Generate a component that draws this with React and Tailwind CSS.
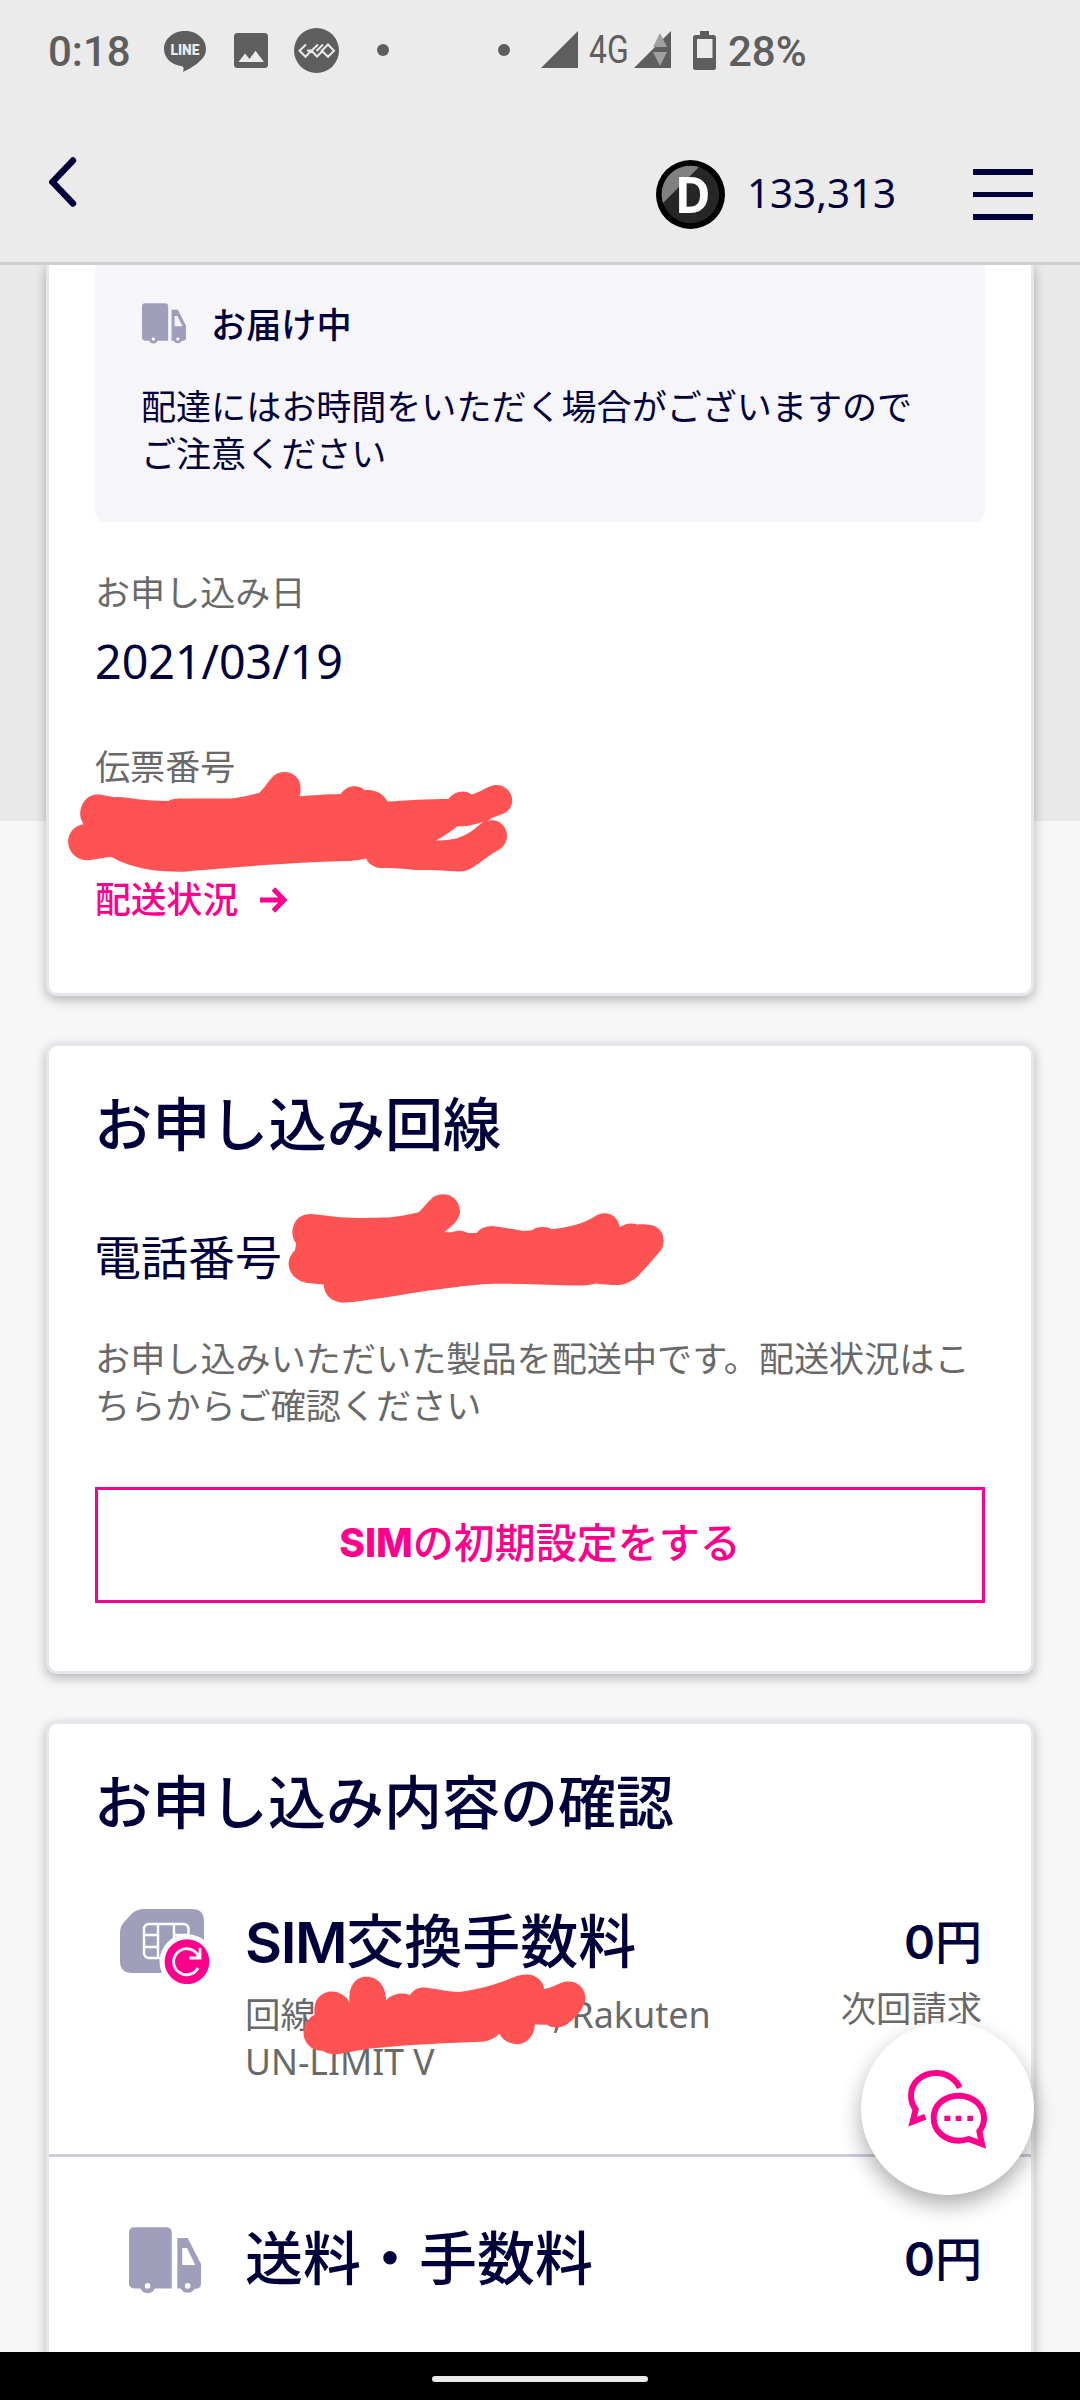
import React from 'react';

const BackIcon = () => (
    <svg className="h-[50px] w-7" viewBox="0 0 28 50" fill="none">
        <path d="M24 3.500 3.500 25l20.500 21.500" stroke="#00003b" strokeWidth="6.400" strokeLinecap="round" />
    </svg>
);

const TruckIcon = ({ className }) => (
    <svg className={className} viewBox="0 0 72.4 67" fill="#9f9fbc" fillRule="evenodd">
        <path d="M5 0H38a5 5 0 0 1 5 5V61.700H26A8 8 0 0 1 11.500 61.700H5a5 5 0 0 1-5-5V5a5 5 0 0 1 5-5ZM18.700 56.200a2.800 2.800 0 1 0 0 5.600 2.800 2.800 0 0 0 0-5.600Z" />
        <path d="M48.600 11H59L72.400 37V57a5 5 0 0 1-5 5H66A8 8 0 0 1 52 61.700H48.600ZM53.600 21V38H66.600L58.300 21ZM59 56.200a2.800 2.800 0 1 0 0 5.600 2.800 2.800 0 0 0 0-5.600Z" />
    </svg>
);

const SimIcon = () => (
    <svg className="h-[75px] w-[90px]" viewBox="0 0 90 75" fill="none">
        <path
            d="M24 0H72Q84 0 84 12V52Q84 64 72 64H12Q0 64 0 52V24Q0 17 5 12L12 4.500Q17 0 24 0Z"
            fill="#9f9fbc"
        />
        <g stroke="#fff" strokeWidth="2.400">
            <rect x="24" y="15" width="44.500" height="34" rx="5" />
            <path d="M38 15V49M54 15V40M24 26H38M24 38H38M54 26H68" />
        </g>
        <circle cx="67" cy="52.700" r="27.500" fill="#fff" />
        <circle cx="67" cy="52.700" r="22.400" fill="#ff008c" />
        <path d="M78 59A13 13 0 1 1 78.500 47.500M80 39V49H69.500" stroke="#fff" strokeWidth="2.800" />
    </svg>
);

const ChatIcon = () => (
    <svg className="-ml-[2px] h-20 w-20" viewBox="1040 565 240 240" fill="none" stroke="#ff008c" strokeWidth="18">
        <path d="M1198 621C1185 593 1158 577 1128 577C1084 577 1052 607 1052 645C1052 660 1056 673 1066 686L1057 723L1095 708" />
        <path d="M1225 775L1265 790L1257 752C1267 740 1271 727 1271 712C1271 674 1237 645 1195 645C1152 645 1120 674 1120 712C1120 750 1152 780 1195 780C1206 780 1216 778 1225 775Z" />
        <path d="M1152 713H1170M1186 713H1203M1221 713H1238" strokeWidth="16" />
    </svg>
);

const StatusBar = () => (
    <div className="relative h-[102px] font-['Roboto',sans-serif] text-[#5e5e5e]">
        <span className="absolute left-12 top-[27px] text-[42px] leading-[50px] font-medium">0:18</span>
        <svg className="absolute left-[164px] top-[31px] h-[41px] w-[42px]" viewBox="0 0 42 41">
            <path
                d="M21 0C32.600 0 42 7.700 42 18C42 22 40.400 25.500 37.500 28.600C33 33.500 25 38.500 19 41C19.800 38.500 20.500 35.500 17 35C7 33.800 0 26.600 0 18C0 7.700 9.400 0 21 0Z"
                fill="#5e5e5e"
            />
            <text x="21" y="23.500" textAnchor="middle" textLength="29" lengthAdjust="spacingAndGlyphs" className="fill-[#ebebeb] font-['Roboto',sans-serif] text-[14.500px] font-black">LINE</text>
        </svg>
        <svg className="absolute left-[234px] top-[33px] h-[35px] w-[34px]" viewBox="0 0 34 35">
            <rect width="34" height="35" rx="3.500" fill="#5e5e5e" />
            <path d="M4.500 29 11 20.500 15.500 26 21.500 17.800 30 29Z" fill="#ebebeb" />
        </svg>
        <svg className="absolute left-[294px] top-7 h-[45px] w-[45px]" viewBox="0 0 45 45" fill="none">
            <circle cx="22.500" cy="22.500" r="22.500" fill="#5e5e5e" />
            <path
                d="M12 16.500 5.500 22.700 11.500 28.800 17.500 22.500 13 22.500M24 16.500 17.500 22.800 23 28.500 29 22.500M29 16.500 22.500 23M34 16.500 27.800 22.700 34 28.800 40 22.700Z"
                stroke="#ebebeb"
                strokeWidth="2"
            />
        </svg>
        <span className="absolute left-[377px] top-11 h-3 w-3 rounded-full bg-[#5e5e5e]" />
        <span className="absolute left-[498px] top-11 h-3 w-3 rounded-full bg-[#5e5e5e]" />
        <svg className="absolute left-[541px] top-[31px] h-[37px] w-[37px]" viewBox="0 0 37 37">
            <path d="M37 0V37H0Z" fill="#5e5e5e" />
        </svg>
        <span className="absolute left-[589px] top-7 origin-left scale-x-[0.840] text-[38px] leading-[44px]">4G</span>
        <svg className="absolute left-[634px] top-[31px] h-[37px] w-[37px]" viewBox="0 0 37 37">
            <path d="M37 0V37H0Z" fill="#5e5e5e" />
            <path d="M26 2 33 16H19Z" fill="#a0a0a0" />
            <path d="M26 35 33 21H19Z" fill="#a0a0a0" />
        </svg>
        <svg className="absolute left-[693px] top-[31px] h-[39px] w-[23px]" viewBox="0 0 23 39">
            <path d="M7 0H16V4H20.500Q23 4 23 6.500V36.500Q23 39 20.500 39H2.500Q0 39 0 36.500V6.500Q0 4 2.500 4H7ZM4 8V27H19.500V8Z" fill="#5e5e5e" fillRule="evenodd" />
        </svg>
        <span className="absolute left-[728px] top-[27px] text-[42px] leading-[50px] font-medium">28%</span>
    </div>
);

const Header = () => (
    <header className="relative z-10 h-[265px] shrink-0 border-b-3 border-[#cfcfcf] bg-[#ebebeb]">
        <StatusBar />
        <div className="flex items-start pl-[49px] pr-[47px]">
            <div className="mt-[55px]">
                <BackIcon />
            </div>
            <div className="ml-auto mt-[58px] flex items-center">
                <svg className="h-[69px] w-[69px] overflow-visible" viewBox="0 0 69 69">
                    <circle cx="34.500" cy="34.500" r="34.500" fill="#000" />
                    <circle cx="34.500" cy="34.500" r="28.700" fill="#262626" />
                    <path d="M7 43A28.700 28.700 0 0 1 43 7Z" fill="#808080" />
                    <text x="19" y="53" textLength="35.500" lengthAdjust="spacingAndGlyphs" className="fill-white font-['Noto_Sans',sans-serif] text-[50px] font-bold">D</text>
                </svg>
                <span className="-mt-1 ml-[22px] w-[226px] text-[40.300px] leading-[56px]">133,313</span>
                <div className="flex w-[60px] flex-col gap-[17px]">
                    <span className="h-[5.500px] bg-[#00003b]" />
                    <span className="h-[5.500px] bg-[#00003b]" />
                    <span className="h-[5.500px] bg-[#00003b]" />
                </div>
            </div>
        </div>
    </header>
);

const DeliveryCard = () => (
    <section className="relative h-[731px] rounded-b-[11px] border-x-3 border-b-3 border-[#e5e5ee] bg-white px-[46px] shadow-[0_4px_12px_rgba(0,0,0,0.28)]">
        <div className="h-[257px] rounded-b-[10px] bg-[#f5f5fa] px-[47px] pt-[34px]">
            <div className="flex h-[50px] items-center">
                <TruckIcon className="-mt-[2px] h-[41px] w-[44px]" />
                <span className="ml-[25px] text-[35.200px] leading-[50px] font-medium">お届け中</span>
            </div>
            <p className="-ml-px mt-[34px] text-[35.050px] leading-[47px] whitespace-nowrap">
                配達にはお時間をいただく場合がございますので
                <br />
                ご注意ください
            </p>
        </div>
        <p className="mt-[47px] text-[35.100px] leading-[47px] text-[#696969]">お申し込み日</p>
        <p className="mt-[15px] text-[46.600px] leading-[60px]">2021/03/19</p>
        <p className="mt-[52px] text-[35.100px] leading-[47px] text-[#696969]">伝票番号</p>
        <a className="mt-[86px] flex items-center text-[35.800px] leading-[47px] font-medium text-[#ff008c]">
            配送状況
            <svg className="ml-[22px] h-[26px] w-7" viewBox="0 0 28 26" fill="none" stroke="#ff008c" strokeWidth="5">
                <path d="M0 13H23M13.500 2 24 13 13.500 24" />
            </svg>
        </a>
        <svg className="absolute left-[18px] top-[505px] h-[103px] w-[448px]" viewBox="80 90 1300 310" preserveAspectRatio="none">
            <path
                d="M128 253C112 230 117 200 132 182C145 165 165 161 182 165L218 172C238 169 255 174 280 177C310 181 350 183 375 183C385 176 395 177 410 176H553C585 172 610 166 637 159C655 142 664 122 680 107C700 90 730 94 746 111C758 124 761 147 755 169C790 166 835 163 874 162C886 145 902 138 917 139C930 140 937 145 944 151C975 147 999 163 1010 185C1060 181 1130 177 1187 177C1203 155 1235 147 1254 164C1280 157 1298 140 1318 136C1350 131 1373 157 1372 184C1370 209 1354 220 1338 225C1324 230 1311 235 1300 243C1335 235 1358 262 1357 290C1355 312 1344 325 1328 333C1295 353 1272 376 1250 387C1234 396 1220 396 1198 395C1160 390 1125 391 1090 391C1055 387 1027 385 986 385C966 380 953 370 948 356C935 359 920 362 895 364C830 366 775 368 715 372C620 378 530 386 420 396C345 397 275 390 208 351C180 354 158 360 137 362C105 360 84 336 83 307C83 277 104 256 128 253ZM1150 302C1175 302 1190 300 1210 296C1240 287 1265 268 1286 246C1260 257 1237 260 1212 260C1193 275 1175 290 1150 302Z"
                fill="#ff5353"
                fillRule="evenodd"
            />
        </svg>
    </section>
);

const LineCard = () => (
    <section className="relative mt-[47px] h-[631px] rounded-[11px] border-3 border-[#e5e5ee] bg-white px-[46px] pt-[43px] shadow-[0_4px_12px_rgba(0,0,0,0.28)]">
        <h2 className="-ml-px text-[58.200px] leading-[70px] font-medium">お申し込み回線</h2>
        <p className="-ml-px mt-[68px] text-[47px] leading-[60px]">電話番号</p>
        <p className="mt-[48px] text-[35.130px] leading-[47px] whitespace-nowrap text-[#696969]">
            お申し込みいただいた製品を配送中です。配送状況はこ
            <br />
            ちらからご確認ください
        </p>
        <button className="mt-[58px] flex h-[116px] w-full items-center justify-center border-3 border-[#ff008c] pb-[4px] text-[41px] font-medium text-[#ff008c]">
            <span className="font-['Inter',sans-serif] text-[39px] font-extrabold">SIM</span>の初期設定をする
        </button>
        <svg className="absolute left-[235px] top-[146px] h-[113px] w-[383px]" viewBox="580 485 910 340" preserveAspectRatio="none">
            <path
                d="M609 640C597 622 599 598 603 585C608 565 622 551 645 551C665 553 690 558 714 561C750 564 795 563 828 562C855 558 880 553 900 546C913 532 920 515 934 501C947 490 965 488 979 499C992 509 999 529 998 548C995 574 976 589 961 606H980C991 599 1006 600 1016 608H1038C1046 594 1058 588 1076 587C1100 591 1122 597 1148 602L1169 600C1182 588 1204 588 1216 597C1255 593 1295 580 1322 556C1346 540 1372 553 1378 591C1390 580 1404 576 1420 583C1433 581 1443 584 1455 585C1473 592 1483 611 1482 633C1481 650 1478 657 1471 667C1454 692 1435 721 1417 743C1402 757 1386 765 1372 765C1355 764 1336 763 1321 760C1300 767 1285 767 1259 766C1200 765 1140 760 1078 761C1045 763 1010 767 980 772C910 783 850 796 790 808C765 813 738 818 718 818C692 814 673 793 675 763C655 760 640 762 622 754C602 744 590 721 591 697C593 679 599 669 606 660Z"
                fill="#ff5353"
            />
        </svg>
    </section>
);

const Price = () => (
    <p className="text-[47px] leading-[70px] font-medium">
        <span className="font-['Inter',sans-serif] font-semibold">0</span>円
    </p>
);

const OrderCard = () => (
    <section className="relative mt-[47px] h-[760px] rounded-[11px] border-3 border-[#e5e5ee] bg-white pt-[43px] shadow-[0_4px_12px_rgba(0,0,0,0.28)]">
        <h2 className="-ml-px px-[46px] text-[58px] leading-[70px] font-medium">お申し込み内容の確認</h2>
        <div className="mt-[69px] flex h-[251px] border-b-3 border-[#cbcbde] pl-[71px] pr-[49px]">
            <div className="w-[125px] shrink-0 pt-[3px]">
                <SimIcon />
            </div>
            <div>
                <h3 className="text-[58px] leading-[70px] font-medium">
                    <span className="font-['Inter',sans-serif] text-[57px] font-semibold tracking-[-0.025em]">SIM</span>交換手数料
                </h3>
                <p className="mt-[13px] text-[35.500px] leading-[47px] whitespace-nowrap text-[#696969]">
                    回線<span className="inline-block w-[246px] text-right">,</span> <span className="text-[36px]">Rakuten</span>
                    <br />
                    UN-LIMIT V
                </p>
            </div>
            <div className="ml-auto text-right">
                <Price />
                <p className="mt-[8px] text-[35.300px] leading-[47px] text-[#696969]">次回請求</p>
            </div>
        </div>
        <div className="flex pl-[80px] pr-[49px] pt-[66px]">
            <div className="w-[116px] shrink-0 pt-1">
                <TruckIcon className="h-[67px] w-[72px]" />
            </div>
            <h3 className="text-[58px] leading-[70px] font-medium">送料・手数料</h3>
            <div className="ml-auto">
                <Price />
            </div>
        </div>
        <svg className="absolute left-[252px] top-[249px] h-[83px] w-[286px]" viewBox="730 700 800 250" preserveAspectRatio="none">
            <path
                d="M768 826C764 790 777 764 805 757C832 752 858 768 866 790C861 750 876 718 903 712C940 705 968 735 968 782C985 763 1010 757 1034 766C1047 749 1060 742 1078 744C1110 749 1145 757 1172 757C1230 750 1280 732 1325 713C1345 704 1366 702 1382 709C1401 719 1409 735 1410 748C1432 745 1447 733 1465 727C1502 719 1526 745 1526 778C1522 805 1505 825 1485 845C1473 857 1457 865 1444 864C1430 864 1424 860 1417 856L1384 855C1383 883 1370 906 1343 914C1314 917 1294 902 1285 883C1270 898 1255 905 1235 907C1140 911 1050 914 940 926C900 931 875 936 848 942C825 948 805 944 790 934C762 935 738 912 737 882C737 854 752 836 768 826Z"
                fill="#ff5353"
            />
        </svg>
    </section>
);

const App = () => {
    return (
        <div className="relative flex h-[2400px] w-[1080px] flex-col overflow-hidden bg-[#f7f7f7] font-['Noto_Sans','Noto_Sans_CJK_JP',sans-serif] text-[#00003b]">
            <Header />
            <main className="flex-1 overflow-hidden bg-[linear-gradient(#e9e9e9_556px,#f7f7f7_556px)] px-[46px]">
                <DeliveryCard />
                <LineCard />
                <OrderCard />
            </main>
            <button className="absolute left-[861px] top-[2022px] flex h-[173px] w-[173px] items-center justify-center rounded-full bg-white shadow-[0_10px_22px_rgba(0,0,0,0.32)]">
                <ChatIcon />
            </button>
            <footer className="z-10 flex h-12 shrink-0 items-center justify-center bg-black pt-[6px]">
                <span className="h-[6px] w-[216px] rounded-full bg-[#e9e9e9]" />
            </footer>
        </div>
    );
};

export default App;
